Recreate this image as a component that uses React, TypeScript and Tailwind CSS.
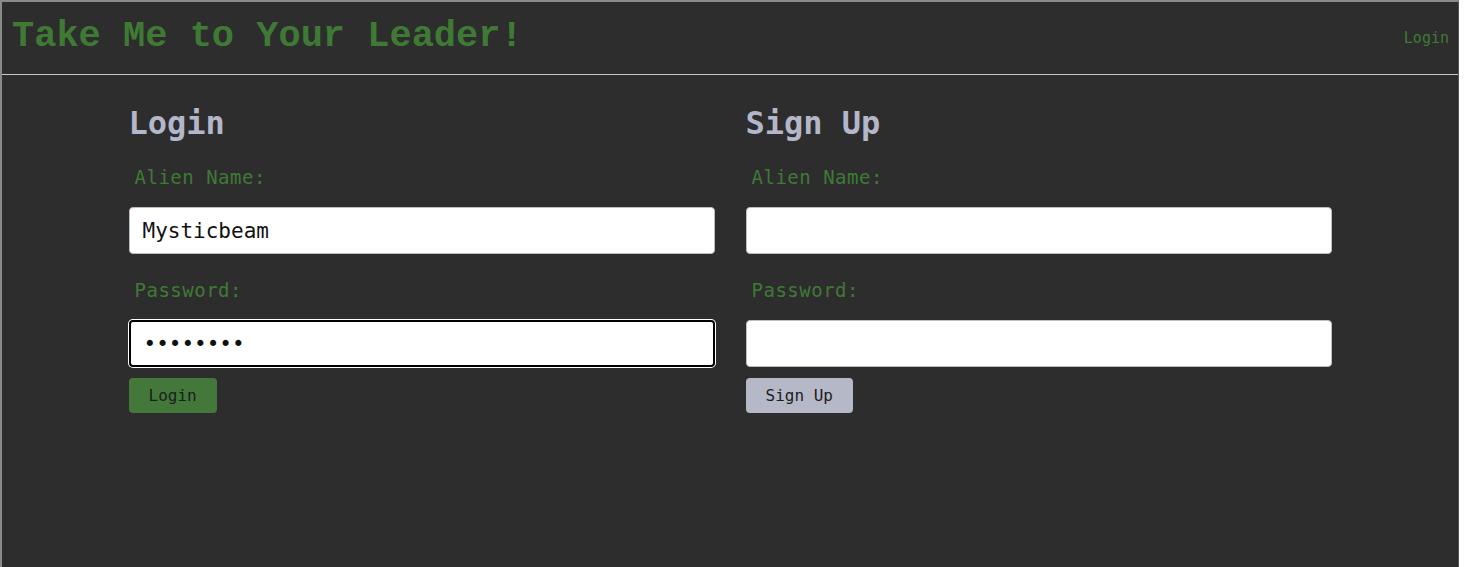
const mono = "font-['DejaVu_Sans_Mono',monospace]";

const Field = ({ label, type = 'text', value = '', focused = false }: { label: string; type?: string; value?: string; focused?: boolean }) => (
  <div className="flex flex-col">
    <label className={`${mono} pl-[6px] text-[19px] leading-[24px] tracking-[0.5px] text-[#3f7a35]`}>{label}</label>
    <input
      type={type}
      defaultValue={value}
      readOnly
      className={`${mono} mt-[18px] h-[47px] w-full rounded-[4px] bg-white px-[13px] text-[21px] text-[#111] outline-none ${
        focused ? 'border-2 border-black ring-1 ring-white' : 'border border-[#bdbdbd]'
      }`}
    />
  </div>
);

const FormCard = ({
  title,
  button,
  buttonClass,
  name = '',
  password = '',
  focused = false,
}: {
  title: string;
  button: string;
  buttonClass: string;
  name?: string;
  password?: string;
  focused?: boolean;
}) => (
  <section className="flex w-[586px] flex-col">
    <h2 className={`${mono} text-[32px] font-bold leading-[40px] text-[#b3b7c9]`}>{title}</h2>
    <div className="mt-[22px] flex flex-col gap-[24px]">
      <Field label="Alien Name:" value={name} />
      <Field label="Password:" type="password" value={password} focused={focused} />
    </div>
    <div className="mt-[11px]">
      <button type="button" className={`${mono} h-[35px] rounded-[4px] px-[20px] text-[16px] text-[#1c1c1c] ${buttonClass}`}>
        {button}
      </button>
    </div>
  </section>
);

export default function App() {
  return (
    <div className="flex h-[567px] w-[1473px] bg-white">
      <div className="flex h-full w-[1459px] flex-col border-l-2 border-t-2 border-r border-l-[#8a8a8a] border-t-[#8a8a8a] border-r-[#555] bg-[#2d2d2d]">
        <header className="flex h-[73px] items-center justify-between border-b border-[#c8c8c8] pb-[3px] pl-[10px] pr-[9px]">
          <h1 className="font-['Liberation_Mono',monospace] text-[37px] font-bold leading-none text-[#3f7a35]">
            Take Me to Your Leader!
          </h1>
          <a className={`${mono} pt-[3px] text-[15px] text-[#3f7a35]`}>Login</a>
        </header>
        <main className="mx-auto mt-[28px] flex w-[1203px] justify-between">
          <FormCard title="Login" button="Login" buttonClass="bg-[#43783a]" name="Mysticbeam" password="abcdefgh" focused />
          <FormCard title="Sign Up" button="Sign Up" buttonClass="bg-[#b5b9c7]" />
        </main>
      </div>
    </div>
  );
}
